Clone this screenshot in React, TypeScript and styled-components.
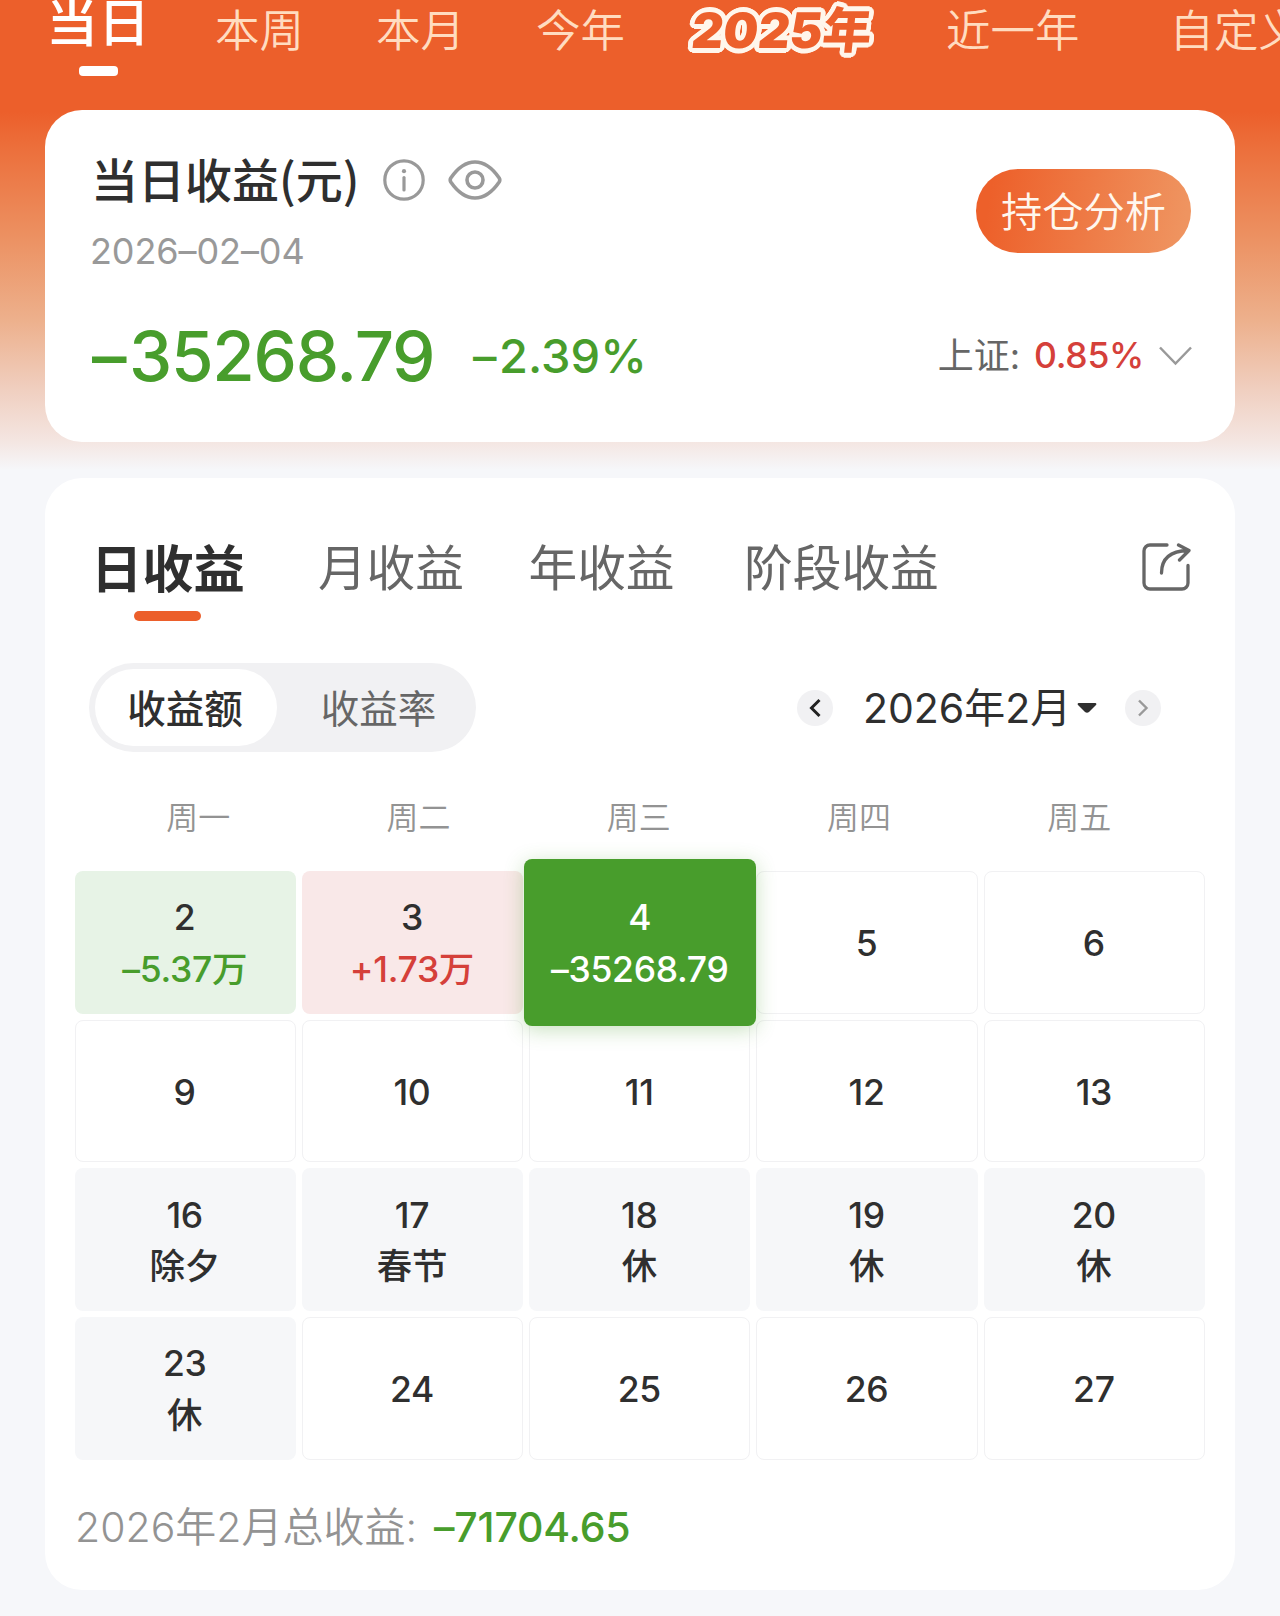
import React from 'react';
import styled, { createGlobalStyle, css } from 'styled-components';

const Global = createGlobalStyle`
  * { box-sizing: border-box; }
  html, body { margin: 0; padding: 0; }
  body {
    width: 1280px;
    overflow: hidden;
    font-family: Inter, "Noto Sans CJK SC", sans-serif;
    font-feature-settings: "calt" 0;
    color: #2f2f2f;
    -webkit-font-smoothing: antialiased;
  }
`;

const GREEN = '#489d2c';
const RED = '#d5403a';
const ORANGE = '#ec5f2b';

const Page = styled.main`
  width: 1280px;
  height: 1616px;
  overflow: hidden;
  display: flex;
  flex-direction: column;
  background: linear-gradient(
    to bottom,
    #ec5f2b 0,
    #ec5f2b 112px,
    #ec6e3a 145px,
    #ec9263 240px,
    #edb08c 320px,
    #f0cfc0 390px,
    #f4e6e2 442px,
    #f6f7fa 470px
  );
`;

const RangeBar = styled.nav`
  height: 110px;
  flex: none;
  display: flex;
  align-items: flex-start;
  padding-left: 46px;
  white-space: nowrap;
`;

const RangeTab = styled.div<{ $gap: number }>`
  margin-left: ${(p) => p.$gap}px;
  flex: none;
  font-size: 44.5px;
  line-height: 63px;
  font-weight: 350;
  color: #ffdcc0;
`;

const ActiveRange = styled.div`
  width: 104px;
  flex: none;
  display: flex;
  flex-direction: column;
  align-items: center;
  font-size: 52px;
  line-height: 47px;
  font-weight: 500;
  color: #fff;
`;

const RangeMark = styled.i`
  width: 39px;
  height: 10px;
  margin-top: 19px;
  border-radius: 4px;
  background: #fff;
`;

const OUTLINE = Array.from({ length: 24 }, (_, i) => {
  const a = (i / 24) * Math.PI * 2;
  return `${(Math.cos(a) * 4.6).toFixed(2)}px ${(Math.sin(a) * 4.6).toFixed(2)}px 0 #fff6ec`;
}).join(', ');

const YearBadge = styled.div`
  flex: none;
  width: 184px;
  padding-left: 1px;
  margin-left: 66px;
  font-size: 49px;
  line-height: 61px;
  font-weight: 900;
  color: ${ORANGE};
  text-shadow: ${OUTLINE};
  transform: skewX(-6deg);
`;

const Card = styled.section`
  width: 1190px;
  margin-left: 45px;
  flex: none;
  border-radius: 37px;
  background: #fff;
`;

const SummaryCard = styled(Card)`
  height: 332px;
  padding: 36px 44px 0 46px;
`;

const Row = styled.div`
  display: flex;
  align-items: center;
`;

const SummaryTop = styled(Row)`
  justify-content: space-between;
  align-items: flex-start;
  height: 124px;
`;

const SummaryTitle = styled(Row)`
  height: 68px;
  font-family: "Noto Sans CJK SC", sans-serif;
  font-size: 47px;
  font-weight: 500;
  line-height: 60px;
  white-space: nowrap;
  svg { flex: none; }
`;

const TitleText = styled.span`
  width: 292px;
  margin-top: -4px;
`;

const DateText = styled.div`
  height: 56px;
  margin-left: -1px;
  line-height: 74px;
  font-size: 36px;
  letter-spacing: -0.1px;
  color: #999;
`;

const AnalysisButton = styled.button`
  width: 215px;
  height: 84px;
  margin-top: 23px;
  border: 0;
  border-radius: 42px;
  padding: 0;
  font: 350 41.3px/87px Inter, "Noto Sans CJK SC", sans-serif;
  color: #fff7ee;
  background: linear-gradient(100deg, #ed602a 8%, #ef9460 95%);
`;

const SummaryBottom = styled(Row)`
  height: 96px;
  margin-top: 38px;
  line-height: 96px;
  white-space: nowrap;
`;

const Sign = styled.span`
  margin-right: 0.055em;
`;

const Amount = styled.span`
  width: 382px;
  padding-left: 1px;
  font-size: 69px;
  font-weight: 500;
  letter-spacing: -1.3px;
  color: ${GREEN};
`;

const Percent = styled.span`
  font-size: 47px;
  font-weight: 500;
  color: ${GREEN};
`;

const IndexPicker = styled(Row)`
  margin-left: auto;
  font-size: 36px;
  line-height: 98px;
  color: #666;
  svg { margin-right: -1px; }
`;

const IndexValue = styled.span`
  margin: 0 15px 0 14px;
  font-size: 35.5px;
  font-weight: 500;
  letter-spacing: -0.3px;
  color: ${RED};
`;

const CalendarCard = styled(Card)`
  height: 1112px;
  margin-top: 36px;
`;

const PeriodBar = styled(Row)`
  height: 133px;
  padding: 44px 44px 0 46px;
  align-items: flex-start;
  white-space: nowrap;
  svg { margin: 21px 0 0 auto; }
`;

const Period = styled.div<{ $active?: boolean; $gap?: number }>`
  margin-left: ${(p) => p.$gap ?? 0}px;
  display: flex;
  flex-direction: column;
  align-items: center;
  font-size: 48.7px;
  line-height: 94px;
  color: #666;
  ${(p) =>
    p.$active &&
    css`
      font-size: 51.3px;
      font-weight: 700;
      color: #2f2f2f;
      &::after {
        content: '';
        width: 67px;
        height: 10px;
        margin-top: -5px;
        border-radius: 5px;
        background: ${ORANGE};
      }
    `}
`;

const FilterBar = styled(Row)`
  height: 89px;
  margin-top: 52px;
  padding: 0 74px 0 44px;
  justify-content: space-between;
`;

const Segment = styled(Row)`
  width: 387px;
  height: 89px;
  padding: 6px;
  border-radius: 45px;
  background: #f1f1f3;
`;

const SegmentItem = styled.div<{ $active?: boolean }>`
  width: ${(p) => (p.$active ? 182 : 193)}px;
  height: 77px;
  padding-left: ${(p) => (p.$active ? 0 : 10)}px;
  padding-right: ${(p) => (p.$active ? 2 : 0)}px;
  border-radius: 39px;
  text-align: center;
  font-size: 38.5px;
  line-height: 80px;
  font-weight: ${(p) => (p.$active ? 500 : 400)};
  color: ${(p) => (p.$active ? '#2f2f2f' : '#666')};
  background: ${(p) => (p.$active ? '#fff' : 'transparent')};
`;

const RoundButton = styled.button`
  width: 36px;
  height: 36px;
  padding: 0;
  border: 0;
  border-radius: 50%;
  display: grid;
  place-items: center;
  background: #f1f1f3;
`;

const MonthLabel = styled(Row)`
  width: 244px;
  margin: 0 18px 0 30px;
  font-size: 41px;
  line-height: 60px;
  white-space: nowrap;
  svg { margin-left: 6px; }
`;

const Weekdays = styled.div`
  display: grid;
  grid-template-columns: repeat(5, 220.3px);
  margin: 39px 0 0 43px;
  height: 52px;
  line-height: 54px;
  text-align: center;
  font-size: 32px;
  font-weight: 350;
  color: #939393;
`;

const Grid = styled.div`
  display: grid;
  grid-template-columns: repeat(5, 1fr);
  grid-auto-rows: 142.7px;
  gap: 6px;
  margin: 28px 30px 0 29.5px;
`;

type Tone = 'plain' | 'loss' | 'gain' | 'rest' | 'selected';

const tones = {
  plain: css`border: 1.5px solid #f1f1f3;`,
  loss: css`background: #e7f3e6; --value: ${GREEN};`,
  gain: css`background: #f9e8e8; --value: ${RED};`,
  rest: css`background: #f6f7f9;`,
  selected: css`
    margin: -12px -6px -12px -5px;
    color: #fff;
    background: ${GREEN};
    box-shadow: 0 4px 20px rgba(72, 157, 44, 0.3);
    z-index: 1;
  `,
};

const Cell = styled.div<{ $tone: Tone }>`
  display: flex;
  flex-direction: column;
  align-items: center;
  justify-content: center;
  padding: 3px 1px 0 0;
  border-radius: 8px;
  font-size: 35.5px;
  line-height: 51.5px;
  letter-spacing: -0.3px;
  font-weight: 500;
  white-space: nowrap;
  ${(p) => tones[p.$tone]}
`;

const CellNote = styled.span`
  color: var(--value, inherit);
`;

const Total = styled(Row)`
  height: 80px;
  margin: 27px 0 0 30px;
  font-size: 41px;
  line-height: 80px;
  font-weight: 350;
  color: #939393;
  white-space: nowrap;
`;

const TotalValue = styled.span`
  margin-left: 17px;
  font-weight: 500;
  letter-spacing: -0.2px;
  color: ${GREEN};
`;

const days: { day: string; note?: string; tone?: Tone }[] = [
  { day: '2', note: '–5.37万', tone: 'loss' },
  { day: '3', note: '+1.73万', tone: 'gain' },
  { day: '4', note: '–35268.79', tone: 'selected' },
  { day: '5' },
  { day: '6' },
  { day: '9' },
  { day: '10' },
  { day: '11' },
  { day: '12' },
  { day: '13' },
  { day: '16', note: '除夕', tone: 'rest' },
  { day: '17', note: '春节', tone: 'rest' },
  { day: '18', note: '休', tone: 'rest' },
  { day: '19', note: '休', tone: 'rest' },
  { day: '20', note: '休', tone: 'rest' },
  { day: '23', note: '休', tone: 'rest' },
  { day: '24' },
  { day: '25' },
  { day: '26' },
  { day: '27' },
];

const InfoIcon = () => (
  <svg width="42" height="42" viewBox="0 0 42 42" fill="none" stroke="#999" strokeWidth="3.2">
    <circle cx="21" cy="21" r="19.2" />
    <path d="M21 18.500v12.500" strokeLinecap="round" />
    <circle cx="21" cy="12.200" r="2.1" fill="#999" stroke="none" />
  </svg>
);

const EyeSvg = styled.svg`
  margin-left: 23px;
`;

const EyeIcon = () => (
  <EyeSvg width="54" height="42" viewBox="0 0 54 42" fill="none" stroke="#999" strokeWidth="3.6">
    <path d="M2.800 19C10 8.500 18 3 27 3s17 5.500 24.200 16q1.200 2 0 4C44 33.500 36 39 27 39S10 33.500 2.800 23q-1.200-2 0-4Z" />
    <circle cx="27" cy="21" r="8" />
  </EyeSvg>
);

const ShareIcon = () => (
  <svg width="49" height="48" viewBox="0 0 49 48" fill="none" stroke="#666" strokeWidth="3.300" strokeLinecap="round" strokeLinejoin="round">
    <path d="M25 2H8a6 6 0 0 0-6 6v32a6 6 0 0 0 6 6h32a6 6 0 0 0 6-6V22.500" />
    <path d="M19.500 30C19.500 16 28 8 46 7.500M36.500 2 47 7.500 37.500 17" />
  </svg>
);

export default function App() {
  return (
    <Page>
      <Global />
      <RangeBar>
        <ActiveRange>
          当日
          <RangeMark />
        </ActiveRange>
        <RangeTab $gap={65}>本周</RangeTab>
        <RangeTab $gap={72}>本月</RangeTab>
        <RangeTab $gap={71}>今年</RangeTab>
        <YearBadge>2025年</YearBadge>
        <RangeTab $gap={71}>近一年</RangeTab>
        <RangeTab $gap={90}>自定义</RangeTab>
      </RangeBar>

      <SummaryCard>
        <SummaryTop>
          <div>
            <SummaryTitle>
              <TitleText>当日收益(元)</TitleText>
              <InfoIcon />
              <EyeIcon />
            </SummaryTitle>
            <DateText>2026–02–04</DateText>
          </div>
          <AnalysisButton>持仓分析</AnalysisButton>
        </SummaryTop>
        <SummaryBottom>
          <Amount>
            <Sign>–</Sign>35268.79
          </Amount>
          <Percent>
            <Sign>–</Sign>2.39%
          </Percent>
          <IndexPicker>
            上证:
            <IndexValue>0.85%</IndexValue>
            <svg width="33" height="20" viewBox="0 0 33 20" fill="none" stroke="#999" strokeWidth="2.500">
              <path d="M1 1.500 16.500 17.500 32 1.500" />
            </svg>
          </IndexPicker>
        </SummaryBottom>
      </SummaryCard>

      <CalendarCard>
        <PeriodBar>
          <Period $active>日收益</Period>
          <Period $gap={73}>月收益</Period>
          <Period $gap={64.5}>年收益</Period>
          <Period $gap={69.5}>阶段收益</Period>
          <ShareIcon />
        </PeriodBar>

        <FilterBar>
          <Segment>
            <SegmentItem $active>收益额</SegmentItem>
            <SegmentItem>收益率</SegmentItem>
          </Segment>
          <Row>
            <RoundButton>
              <svg width="12" height="20" viewBox="0 0 12 20" fill="none" stroke="#222" strokeWidth="3">
                <path d="M10.500 2 2.500 10l8 8" />
              </svg>
            </RoundButton>
            <MonthLabel>
              2026年2月
              <svg width="20" height="10" viewBox="0 0 20 10" fill="#2f2f2f">
                <path d="M1.500 0h17q1.500.500.500 2l-7 7q-2 1.500-4 0l-7-7Q0 .500 1.500 0Z" />
              </svg>
            </MonthLabel>
            <RoundButton>
              <svg width="12" height="18" viewBox="0 0 12 18" fill="none" stroke="#999" strokeWidth="2.400">
                <path d="M2 1.500 9.500 9 2 16.500" />
              </svg>
            </RoundButton>
          </Row>
        </FilterBar>

        <Weekdays>
          {['周一', '周二', '周三', '周四', '周五'].map((d) => (
            <span key={d}>{d}</span>
          ))}
        </Weekdays>

        <Grid>
          {days.map(({ day, note, tone = 'plain' }) => (
            <Cell key={day} $tone={tone}>
              <span>{day}</span>
              {note && <CellNote>{note}</CellNote>}
            </Cell>
          ))}
        </Grid>

        <Total>
          2026年2月总收益:
          <TotalValue>–71704.65</TotalValue>
        </Total>
      </CalendarCard>
    </Page>
  );
}
